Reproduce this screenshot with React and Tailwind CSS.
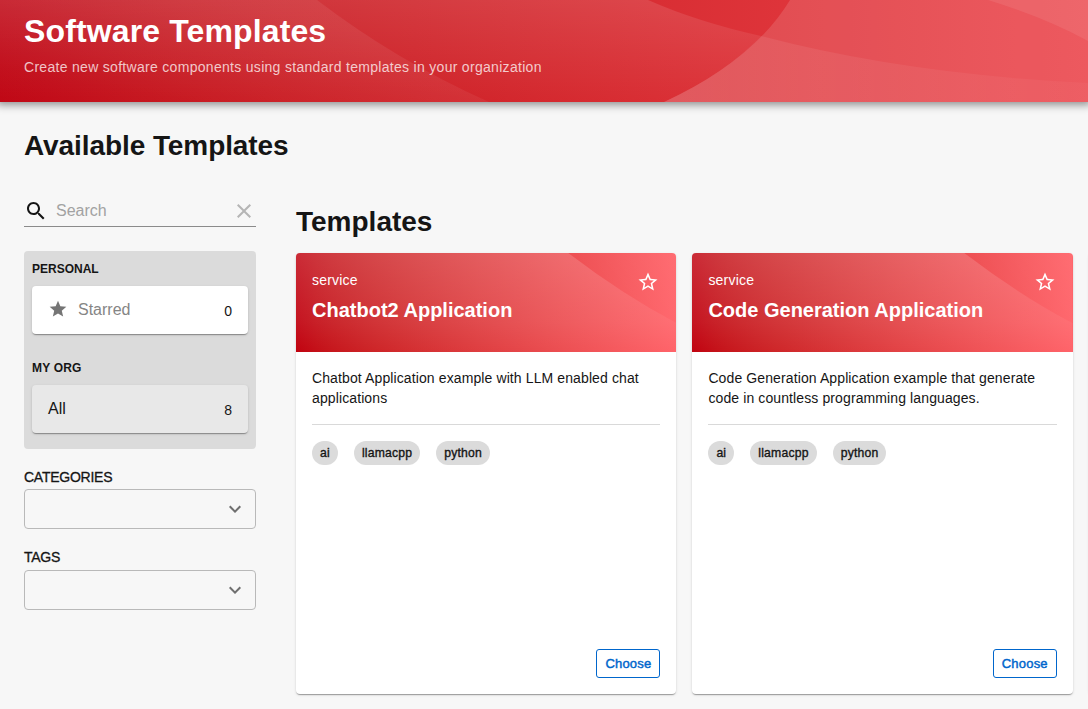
import React from 'react';

function HeaderWaves() {
  return (
    <svg className="absolute inset-0 size-full" viewBox="0 0 1088 102" preserveAspectRatio="none" aria-hidden="true">
      <defs>
        <linearGradient id="h-left" x1="200" y1="0" x2="180" y2="102" gradientUnits="userSpaceOnUse">
          <stop stopColor="#fff" stopOpacity="0.07" />
          <stop offset="1" stopColor="#fff" stopOpacity="0.03" />
        </linearGradient>
        <linearGradient id="h-wash" x1="0" y1="0" x2="0" y2="102" gradientUnits="userSpaceOnUse">
          <stop stopColor="#fff" stopOpacity="0.115" />
          <stop offset="1" stopColor="#fff" stopOpacity="0" />
        </linearGradient>
        <linearGradient id="h-low" x1="664" y1="0" x2="1088" y2="0" gradientUnits="userSpaceOnUse">
          <stop stopColor="#fff" stopOpacity="0.09" />
          <stop offset="1" stopColor="#fff" stopOpacity="0.03" />
        </linearGradient>
      </defs>
      <path d="M0 0H317Q397 61 489 102H0Z" fill="url(#h-left)" />
      <path d="M0 0H648Q698 22 761 36Q728 72 664 102H0Z" fill="url(#h-wash)" />
      <path d="M790 0Q753 61 664 102H1088V0Z" fill="#fff" fillOpacity="0.13" />
      <path d="M761 36Q905 74 1088 83V102H664Q725 74 761 36Z" fill="url(#h-low)" />
      <path d="M988 0Q1046 18 1088 41V0Z" fill="#fff" fillOpacity="0.08" />
    </svg>
  );
}

function CardWave({ id }) {
  return (
    <svg className="absolute inset-0 size-full" viewBox="0 0 380 99" preserveAspectRatio="none" aria-hidden="true">
      <defs>
        <linearGradient id={id} x1="0" y1="0" x2="0" y2="99" gradientUnits="userSpaceOnUse">
          <stop stopColor="#fff" stopOpacity="0.17" />
          <stop offset="0.7" stopColor="#fff" stopOpacity="0.08" />
          <stop offset="1" stopColor="#fff" stopOpacity="0.01" />
        </linearGradient>
        <linearGradient id={`${id}-r`} x1="300" y1="60" x2="380" y2="0" gradientUnits="userSpaceOnUse">
          <stop stopColor="#fff" stopOpacity="0" />
          <stop offset="1" stopColor="#fff" stopOpacity="0.07" />
        </linearGradient>
      </defs>
      <path d="M0 0H272Q327 42 380 70V99H0Z" fill={`url(#${id})`} />
      <path d="M272 0Q327 42 380 70V0Z" fill={`url(#${id}-r)`} />
    </svg>
  );
}

const STAR = 'M12 17.27L18.18 21l-1.64-7.03L22 9.24l-7.19-.61L12 2 9.19 8.63 2 9.24l5.46 4.73L5.82 21z';
const STAR_OUTLINE =
  'M22 9.24l-7.19-.62L12 2 9.19 8.63 2 9.24l5.46 4.73L5.82 21 12 17.27 18.18 21l-1.63-7.03L22 9.24zM12 15.4l-3.76 2.27 1-4.28-3.32-2.88 4.38-.38L12 6.1l1.71 4.04 4.38.38-3.32 2.88 1 4.28L12 15.4z';
const SEARCH =
  'M15.5 14h-.79l-.28-.27C15.41 12.59 16 11.11 16 9.5 16 5.91 13.09 3 9.5 3S3 5.91 3 9.5 5.91 16 9.5 16c1.61 0 3.09-.59 4.23-1.57l.27.28v.79l5 4.99L20.49 19l-4.99-5zm-6 0C7.01 14 5 11.99 5 9.5S7.01 5 9.5 5 14 7.01 14 9.5 11.99 14 9.5 14z';
const CLEAR = 'M19 6.41L17.59 5 12 10.59 6.41 5 5 6.41 10.59 12 5 17.59 6.41 19 12 13.41 17.59 19 19 17.59 13.41 12z';
const CHEVRON = 'M7.41 8.59L12 13.17l4.59-4.58L18 10l-6 6-6-6z';

function Icon({ d, className }) {
  return (
    <svg viewBox="0 0 24 24" className={className} fill="currentColor" aria-hidden="true">
      <path d={d} />
    </svg>
  );
}

function FilterItem({ label, count, icon, className, labelClass }) {
  return (
    <div
      className={`flex h-12 items-center rounded px-4 shadow-[0_2px_1px_-1px_rgba(0,0,0,0.2),0_1px_1px_rgba(0,0,0,0.14),0_1px_3px_rgba(0,0,0,0.12)] ${className}`}
    >
      {icon && <Icon d={STAR} className="mr-[10px] mb-0.5 size-5 text-[#757575]" />}
      <span className={`flex-1 pb-px text-base ${labelClass}`}>{label}</span>
      <span className="pt-0.5 text-sm">{count}</span>
    </div>
  );
}

function Select({ label, className, labelClass }) {
  return (
    <div className={className}>
      <div className={`text-sm leading-5 tracking-[-0.25px] [-webkit-text-stroke:0.3px_#151515] ${labelClass}`}>{label}</div>
      <div className="flex h-10 items-center justify-end rounded border border-[#b9b9b9] pr-2">
        <Icon d={CHEVRON} className="size-6 text-[#6f6f6f]" />
      </div>
    </div>
  );
}

function TemplateCard({ id, title, description }) {
  return (
    <article className="flex h-[441px] w-[380.4px] shrink-0 flex-col overflow-hidden rounded bg-white shadow-[0_2px_1px_-1px_rgba(0,0,0,0.2),0_1px_1px_rgba(0,0,0,0.14),0_1px_3px_rgba(0,0,0,0.12)]">
      <div className="relative h-[99px] shrink-0 bg-linear-to-r from-[#c0000d] to-[#ff6268] px-4 pt-[17px] text-white">
        <CardWave id={id} />
        <div className="relative flex justify-between">
          <span className="text-sm leading-5 tracking-[0.2px]">service</span>
          <Icon d={STAR_OUTLINE} className="-mb-2 size-6 scale-[0.95]" />
        </div>
        <h3 className="relative mt-[8px] text-xl leading-6 font-bold">{title}</h3>
      </div>
      <div className="flex flex-1 flex-col px-4 pt-4 pb-4">
        <p className="h-10 text-sm leading-5 tracking-[0.11px]">{description}</p>
        <div className="mt-4 border-t border-[#d9d9d9]" />
        <div className="mt-4 flex gap-4">
          {['ai', 'llamacpp', 'python'].map((tag) => (
            <span key={tag} className="flex h-6 items-center rounded-full bg-[#dbdbdb] px-2 text-[12.2px] tracking-[0.2px] [-webkit-text-stroke:0.35px_#151515]">
              {tag}
            </span>
          ))}
        </div>
        <button className="mt-auto flex h-[29px] w-16 items-center justify-center self-end rounded-[3px] border border-[#0066cc] text-[13px] tracking-[0.2px] text-[#0066cc] [-webkit-text-stroke:0.45px_#0066cc]">
          Choose
        </button>
      </div>
    </article>
  );
}

export default function App() {
  return (
    <div className="flex h-[709px] w-[1088px] flex-col overflow-hidden bg-[#f7f7f7] font-['Liberation_Sans',Arial,sans-serif] text-[#151515]">
      <header className="relative h-[102px] shrink-0 bg-linear-to-r from-[#be000e] to-[#eb4148] px-6 shadow-[0_0_8px_3px_rgba(20,20,20,0.45)]">
        <HeaderWaves />
        <h1 className="relative pt-[12px] text-[32px] leading-[38px] font-bold tracking-[0.13px] text-white">Software Templates</h1>
        <p className="relative mt-[7px] text-sm leading-5 tracking-[0.3px] text-white/75">
          Create new software components using standard templates in your organization
        </p>
      </header>
      <main className="flex min-h-0 flex-1 flex-col pl-6">
        <h2 className="mt-[28px] h-8 text-[28px] leading-8 font-bold tracking-[-0.08px]">Available Templates</h2>
        <div className="mt-[32px] flex">
          <aside className="w-[232px] shrink-0">
            <div className="flex h-[33px] items-center border-b border-[#8b8b8b] pt-[2px]">
              <Icon d={SEARCH} className="size-6" />
              <span className="ml-2 flex-1 text-base text-[#a2a2a2]">Search</span>
              <Icon d={CLEAR} className="size-6 text-[#b5b5b5]" />
            </div>
            <div className="mt-6 h-[198px] rounded bg-[#dbdbdb] px-2 pt-2">
              <h6 className="h-[27px] text-xs leading-5 font-bold">PERSONAL</h6>
              <FilterItem label="Starred" count="0" icon className="bg-white" labelClass="text-[#858585]" />
              <h6 className="mt-6 h-[27px] text-xs leading-5 font-bold tracking-[0.2px]">MY ORG</h6>
              <FilterItem label="All" count="8" className="bg-[#e8e8e8]" labelClass="" />
            </div>
            <Select label="CATEGORIES" className="mt-[18px]" labelClass="h-[22px]" />
            <Select label="TAGS" className="mt-[18px]" labelClass="h-[23px]" />
          </aside>
          <section className="ml-10 min-w-0 flex-1">
            <h2 className="mt-[12px] h-[47px] text-[28px] leading-8 font-bold">Templates</h2>
            <div className="flex gap-4">
              <TemplateCard id="a" title="Chatbot2 Application" description="Chatbot Application example with LLM enabled chat applications" />
              <TemplateCard id="b" title="Code Generation Application" description="Code Generation Application example that generate code in countless programming languages." />
              <div className="h-[441px] w-[380.4px] shrink-0 rounded shadow-[0_2px_1px_-1px_rgba(0,0,0,0.2),0_1px_1px_rgba(0,0,0,0.14),0_1px_3px_rgba(0,0,0,0.12)]" />
            </div>
          </section>
        </div>
      </main>
    </div>
  );
}
